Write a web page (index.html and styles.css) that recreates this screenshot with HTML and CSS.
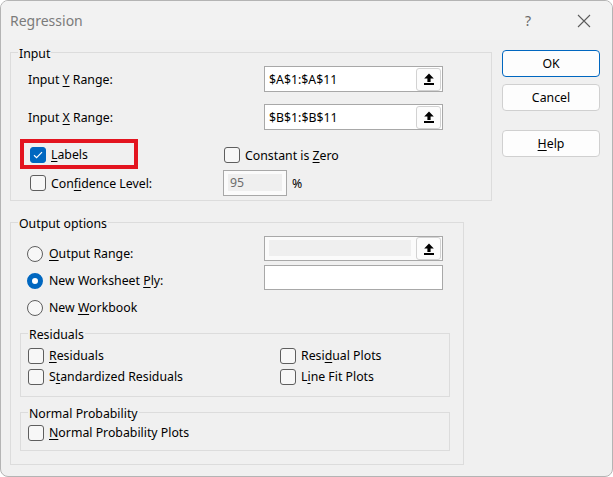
FILE: index.html
```html
<!DOCTYPE html>
<html>
<head>
<meta charset="utf-8">
<link rel="stylesheet" href="styles.css">
</head>
<body>
<div class="window">
  <div class="titlebar">
    <span class="title">Regression</span>
    <span class="qmark">?</span>
    <span class="close"><svg width="14" height="14" viewBox="0 0 14 14"><path d="M1 1 L13 13 M13 1 L1 13" stroke="#5c5c5c" stroke-width="1.1" fill="none"/></svg></span>
  </div>
  <div class="content">
    <div class="left">
      <fieldset class="group input-group">
        <legend>Input</legend>
        <div class="range-row">
          <span class="lbl">Input <u>Y</u> Range:</span>
          <div class="field"><span class="val">$A$1:$A$11</span><span class="pick"><svg width="12" height="12" viewBox="0 0 12 12"><path d="M6 0.5 L1.2 5.5 L4.4 5.5 L4.4 9 L7.6 9 L7.6 5.5 L10.8 5.5 Z" fill="#000"/><rect x="1" y="10" width="10" height="2" fill="#000"/></svg></span></div>
        </div>
        <div class="range-row second">
          <span class="lbl">Input <u>X</u> Range:</span>
          <div class="field"><span class="val">$B$1:$B$11</span><span class="pick"><svg width="12" height="12" viewBox="0 0 12 12"><path d="M6 0.5 L1.2 5.5 L4.4 5.5 L4.4 9 L7.6 9 L7.6 5.5 L10.8 5.5 Z" fill="#000"/><rect x="1" y="10" width="10" height="2" fill="#000"/></svg></span></div>
        </div>
        <div class="labels-row">
          <div class="redbox">
            <span class="chk"><span class="box checked"><svg width="10" height="8" viewBox="0 0 10 8"><path d="M1 4.2 L3.6 6.6 L9 1.2" stroke="#fff" stroke-width="1.2" fill="none"/></svg></span><span><u>L</u>abels</span></span>
          </div>
          <span class="chk constant"><span class="box"></span><span>Constant is <u>Z</u>ero</span></span>
        </div>
        <div class="conf-row">
          <span class="chk conf"><span class="box"></span><span>Con<u>f</u>idence Level:</span></span>
          <div class="field small disabled"><span class="fill">95</span></div>
          <span class="pct">%</span>
        </div>
      </fieldset>

      <fieldset class="group output-group">
        <legend>Output options</legend>
        <div class="out-top">
          <div class="radios">
            <span class="rad"><span class="circle"></span><span><u>O</u>utput Range:</span></span>
            <span class="rad"><span class="circle on"></span><span>New Worksheet <u>P</u>ly:</span></span>
            <span class="rad"><span class="circle"></span><span>New <u>W</u>orkbook</span></span>
          </div>
          <div class="out-fields">
            <div class="field disabled"><span class="fill wide"></span><span class="pick"><svg width="12" height="12" viewBox="0 0 12 12"><path d="M6 0.5 L1.2 5.5 L4.4 5.5 L4.4 9 L7.6 9 L7.6 5.5 L10.8 5.5 Z" fill="#000"/><rect x="1" y="10" width="10" height="2" fill="#000"/></svg></span></div>
            <div class="field"></div>
          </div>
        </div>

        <fieldset class="group sub residuals">
          <legend>Residuals</legend>
          <div class="grid">
            <span class="chk"><span class="box"></span><span><u>R</u>esiduals</span></span>
            <span class="chk"><span class="box"></span><span>Resi<u>d</u>ual Plots</span></span>
            <span class="chk"><span class="box"></span><span>S<u>t</u>andardized Residuals</span></span>
            <span class="chk"><span class="box"></span><span>L<u>i</u>ne Fit Plots</span></span>
          </div>
        </fieldset>

        <fieldset class="group sub normal">
          <legend>Normal Probability</legend>
          <div class="grid single">
            <span class="chk"><span class="box"></span><span><u>N</u>ormal Probability Plots</span></span>
          </div>
        </fieldset>
      </fieldset>
    </div>

    <div class="buttons">
      <button class="btn default">OK</button>
      <button class="btn">Cancel</button>
      <button class="btn help"><u>H</u>elp</button>
    </div>
  </div>
</div>
</body>
</html>
```

FILE: styles.css
```css
* { box-sizing: border-box; }
html, body {
  margin: 0;
  padding: 0;
  width: 613px;
  height: 477px;
  overflow: hidden;
  background: #ffffff;
}
body {
  font-family: "Noto Sans", "Open Sans", sans-serif;
  font-size: 12.3px;
  color: #000;
}
u { text-decoration: underline; text-underline-offset: 2px; text-decoration-thickness: 1px; }

.window {
  width: 613px;
  height: 477px;
  border: 1px solid #b4b4b4;
  border-radius: 8px;
  background: #f0f0f0;
  overflow: hidden;
}

.titlebar {
  height: 39px;
  display: flex;
  align-items: center;
  padding-left: 9px;
  background: #f2f2f2;
}
.title {
  font-size: 14px;
  color: #7b7b7b;
  flex: 1;
  line-height: 20px;
}
.qmark {
  font-size: 14px;
  color: #6a6a6a;
  width: 52px;
  line-height: 20px;
}
.close {
  width: 35px;
  display: flex;
  align-items: center;
}

.content {
  display: flex;
  padding-top: 2px;
  padding-left: 9px;
}
.left {
  width: 482px;
  display: flex;
  flex-direction: column;
}

.group {
  margin: 0;
  padding: 0;
  border: 1px solid #dcdcdc;
  min-inline-size: 0;
}
.group > legend {
  padding: 4px 1px 0 1px;
  margin-left: 7px;
  line-height: 16px;
  font-size: 12.3px;
}

.input-group {
  width: 482px;
  padding-bottom: 4px;
}
.range-row {
  display: flex;
  align-items: center;
  height: 26px;
  margin-top: 4px;
  padding-left: 17px;
}
.range-row.second { margin-top: 12px; }
.lbl { width: 236px; }

.field {
  width: 179px;
  height: 26px;
  border: 1px solid #a8a8a8;
  background: #fff;
  display: flex;
  align-items: center;
}
.out-fields .field { height: 25px; }
.val { padding-left: 4px; flex: 1; }
.pick {
  width: 25px;
  height: 23px;
  margin-right: 1px;
  border: 1px solid #d2d2d2;
  border-radius: 3px;
  background: #fcfcfc;
  display: flex;
  align-items: center;
  justify-content: center;
}

.labels-row {
  display: flex;
  align-items: center;
  margin-top: 9px;
}
.redbox {
  margin-left: 9px;
  width: 118px;
  height: 30px;
  border: 4px solid #e3141f;
  padding-left: 6px;
  padding-top: 1px;
  display: flex;
  align-items: center;
}
.constant { margin-left: 86px; padding-top: 2px; }

.conf-row {
  display: flex;
  align-items: center;
  height: 26px;
  margin-top: 1px;
  padding-left: 19px;
}
.conf { width: 193px; }
.field.small { width: 64px; }
.field.disabled { background: #fbfbfb; }
.fill {
  margin: 3px 4px 4px 4px;
  align-self: stretch;
  flex: 1;
  background: #efefef;
  color: #6d6d6d;
  padding-left: 2px;
  display: flex;
  align-items: center;
}
.fill.wide { margin-right: 5px; }
.pct { margin-left: 5px; }

.chk {
  display: flex;
  align-items: center;
  gap: 5px;
  white-space: nowrap;
}
.box {
  width: 16px;
  height: 16px;
  border: 1px solid #5e5e5e;
  border-radius: 3px;
  background: #f7f7f7;
  flex: none;
  display: flex;
  align-items: center;
  justify-content: center;
}
.box.checked {
  background: #0067c0;
  border-color: #0067c0;
}

.output-group {
  width: 454px;
  margin-top: 11px;
  padding-bottom: 13px;
}
.out-top { display: flex; }
.radios {
  width: 253px;
  padding-top: 8px;
  padding-left: 16px;
  display: flex;
  flex-direction: column;
}
.rad {
  height: 27px;
  display: flex;
  align-items: center;
  gap: 6px;
}
.circle {
  width: 16px;
  height: 16px;
  border-radius: 50%;
  border: 1px solid #5e5e5e;
  background: #f7f7f7;
  flex: none;
}
.circle.on {
  border: 5px solid #0067c0;
  background: #fff;
}
.out-fields {
  margin-top: 4px;
  display: flex;
  flex-direction: column;
  gap: 4px;
}

.sub {
  margin-left: 9px;
  width: 430px;
}
.residuals { margin-top: 2px; }
.normal { margin-top: 5px; }
.grid {
  display: grid;
  grid-template-columns: 252px auto;
  grid-auto-rows: 21px;
  align-items: center;
  padding: 2px 0 9px 7px;
}
.grid.single { padding: 0 0 7px 7px; }

.buttons {
  margin-left: 10px;
  margin-top: 8px;
  display: flex;
  flex-direction: column;
  gap: 7px;
}
.btn {
  width: 98px;
  height: 27px;
  border: 1px solid #d0d0d0;
  border-radius: 4px;
  background: #fdfdfd;
  font-family: "Noto Sans", "Open Sans", sans-serif;
  font-size: 12.3px;
  color: #000;
  padding: 0;
}
.btn.default { border-color: #0067c0; }
.btn.help { margin-top: 12px; }
```
